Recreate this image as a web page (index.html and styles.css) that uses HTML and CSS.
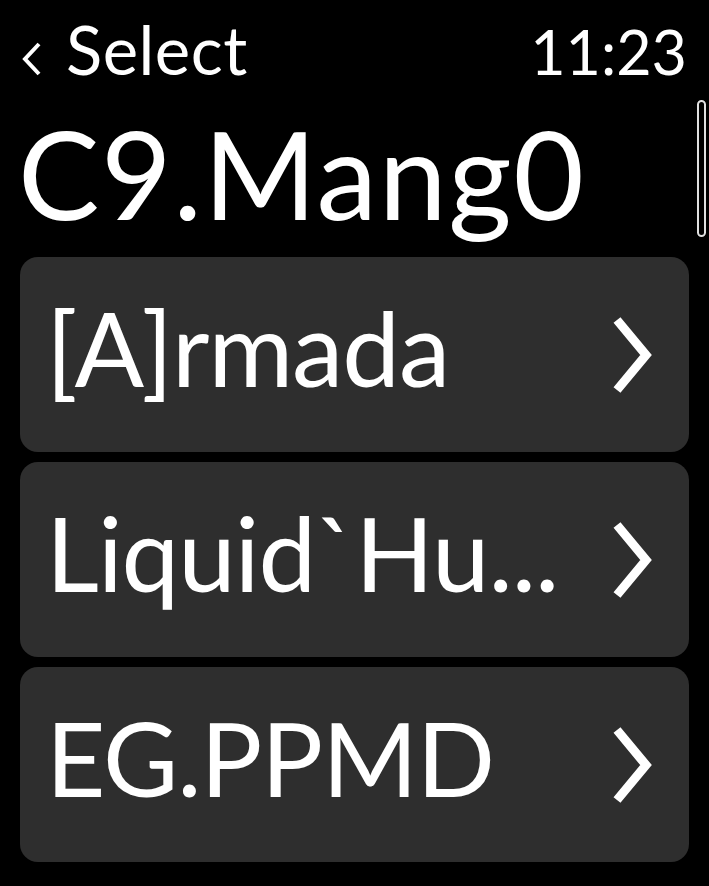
FILE: index.html
```html
<!DOCTYPE html>
<html lang="en">
<head>
<meta charset="utf-8">
<title>C9.Mang0</title>
<link rel="stylesheet" href="styles.css">
</head>
<body>
<div class="screen">
  <header class="topbar">
    <div class="back">
      <svg class="back-icon" width="24" height="34" viewBox="0 0 24 34" aria-hidden="true">
        <polyline points="19,2 5,17 19,32" fill="none" stroke="#fff" stroke-width="4"/>
      </svg>
      <span class="back-label">Select</span>
    </div>
    <span class="time">11:23</span>
  </header>
  <h1 class="title">C9.Mang0</h1>
  <ul class="list">
    <li class="row"><span class="row-label">[A]rmada</span><svg class="chev" width="40" height="76" viewBox="0 0 40 76" aria-hidden="true"><polyline points="4,3 33,38 4,73" fill="none" stroke="#fff" stroke-width="9"/></svg></li>
    <li class="row"><span class="row-label">Liquid`Hu...</span><svg class="chev" width="40" height="76" viewBox="0 0 40 76" aria-hidden="true"><polyline points="4,3 33,38 4,73" fill="none" stroke="#fff" stroke-width="9"/></svg></li>
    <li class="row"><span class="row-label">EG.PPMD</span><svg class="chev" width="40" height="76" viewBox="0 0 40 76" aria-hidden="true"><polyline points="4,3 33,38 4,73" fill="none" stroke="#fff" stroke-width="9"/></svg></li>
  </ul>
  <div class="scroll-indicator"></div>
</div>
</body>
</html>
```

FILE: styles.css
```css
html, body {
  margin: 0;
  padding: 0;
  background: #000;
}
body {
  font-family: Lato, "Open Sans", sans-serif;
  font-weight: 400;
  color: #fff;
}
.screen {
  position: relative;
  width: 709px;
  height: 886px;
  overflow: hidden;
  background: #000;
}
.topbar {
  display: flex;
  justify-content: space-between;
  align-items: baseline;
  padding: 9px 22px 0 20px;
  height: 80px;
}
.back {
  display: flex;
  align-items: baseline;
}
.back-icon {
  display: block;
  align-self: center;
  margin: 20px 22px 0 0;
}
.back-label {
  font-size: 67px;
  letter-spacing: 0.5px;
  line-height: 80px;
}
.time {
  font-size: 61px;
  line-height: 80px;
}
.title {
  margin: 19px 0 0 18px;
  font-size: 122px;
  font-weight: 400;
  letter-spacing: 1.5px;
  line-height: 130px;
  height: 130px;
}
.list {
  list-style: none;
  margin: 19px 20px 0 20px;
  padding: 0;
  display: flex;
  flex-direction: column;
  gap: 10px;
}
.row {
  display: flex;
  align-items: center;
  justify-content: space-between;
  height: 195px;
  background: #2e2e2e;
  border-radius: 18px;
  padding: 0 36px 0 26px;
  box-sizing: border-box;
}
.row-label {
  font-size: 103px;
  letter-spacing: -1px;
  line-height: 124px;
  margin-bottom: 15px;
  white-space: nowrap;
}
.chev {
  display: block;
  flex-shrink: 0;
}
.scroll-indicator {
  position: absolute;
  left: 697px;
  top: 100px;
  width: 9px;
  height: 137px;
  box-sizing: border-box;
  border: 2px solid #e0e0e0;
  border-radius: 5px;
}
```
